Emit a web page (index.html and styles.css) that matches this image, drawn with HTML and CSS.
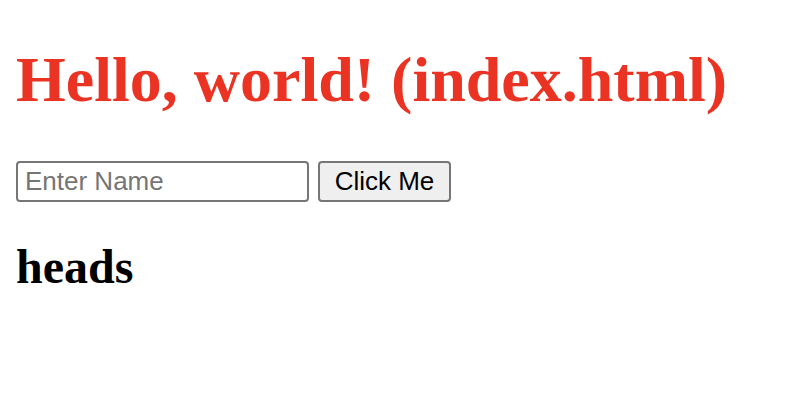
FILE: index.html
```html
<!DOCTYPE html>
<html>
<head>
<meta charset="utf-8">
<title>Hello</title>
<link rel="stylesheet" href="styles.css">
</head>
<body>
<h1 class="title">Hello, world! (index.html)</h1>
<div class="form-row">
  <input class="name-input" type="text" placeholder="Enter Name">
  <button class="click-btn" type="button">Click Me</button>
</div>
<h2 class="result">heads</h2>
</body>
</html>
```

FILE: styles.css
```css
html, body {
  margin: 0;
  padding: 0;
  background: #ffffff;
}
body {
  padding: 0 16px;
  font-family: "Liberation Serif", "Times New Roman", serif;
}
.title {
  margin: 43px 0 44px;
  font-size: 64px;
  font-weight: bold;
  color: #ea3323;
  line-height: normal;
}
.form-row {
  display: flex;
  gap: 9px;
  align-items: center;
}
.name-input {
  box-sizing: border-box;
  width: 293px;
  height: 41px;
  margin: 0;
  padding: 0 7px;
  border: 2px solid #767676;
  border-radius: 4px;
  font-family: "Liberation Sans", Arial, sans-serif;
  font-size: 26px;
  color: #000;
  background: #fff;
  outline: none;
}
.name-input::placeholder {
  color: #757575;
}
.click-btn {
  box-sizing: border-box;
  width: 133px;
  height: 41px;
  margin: 0;
  padding: 0;
  border: 2px solid #767676;
  border-radius: 4px;
  background: #efefef;
  font-family: "Liberation Sans", Arial, sans-serif;
  font-size: 26px;
  color: #000;
}
.result {
  margin: 37px 0;
  font-size: 48px;
  font-weight: bold;
  line-height: normal;
  color: #000;
}
```
